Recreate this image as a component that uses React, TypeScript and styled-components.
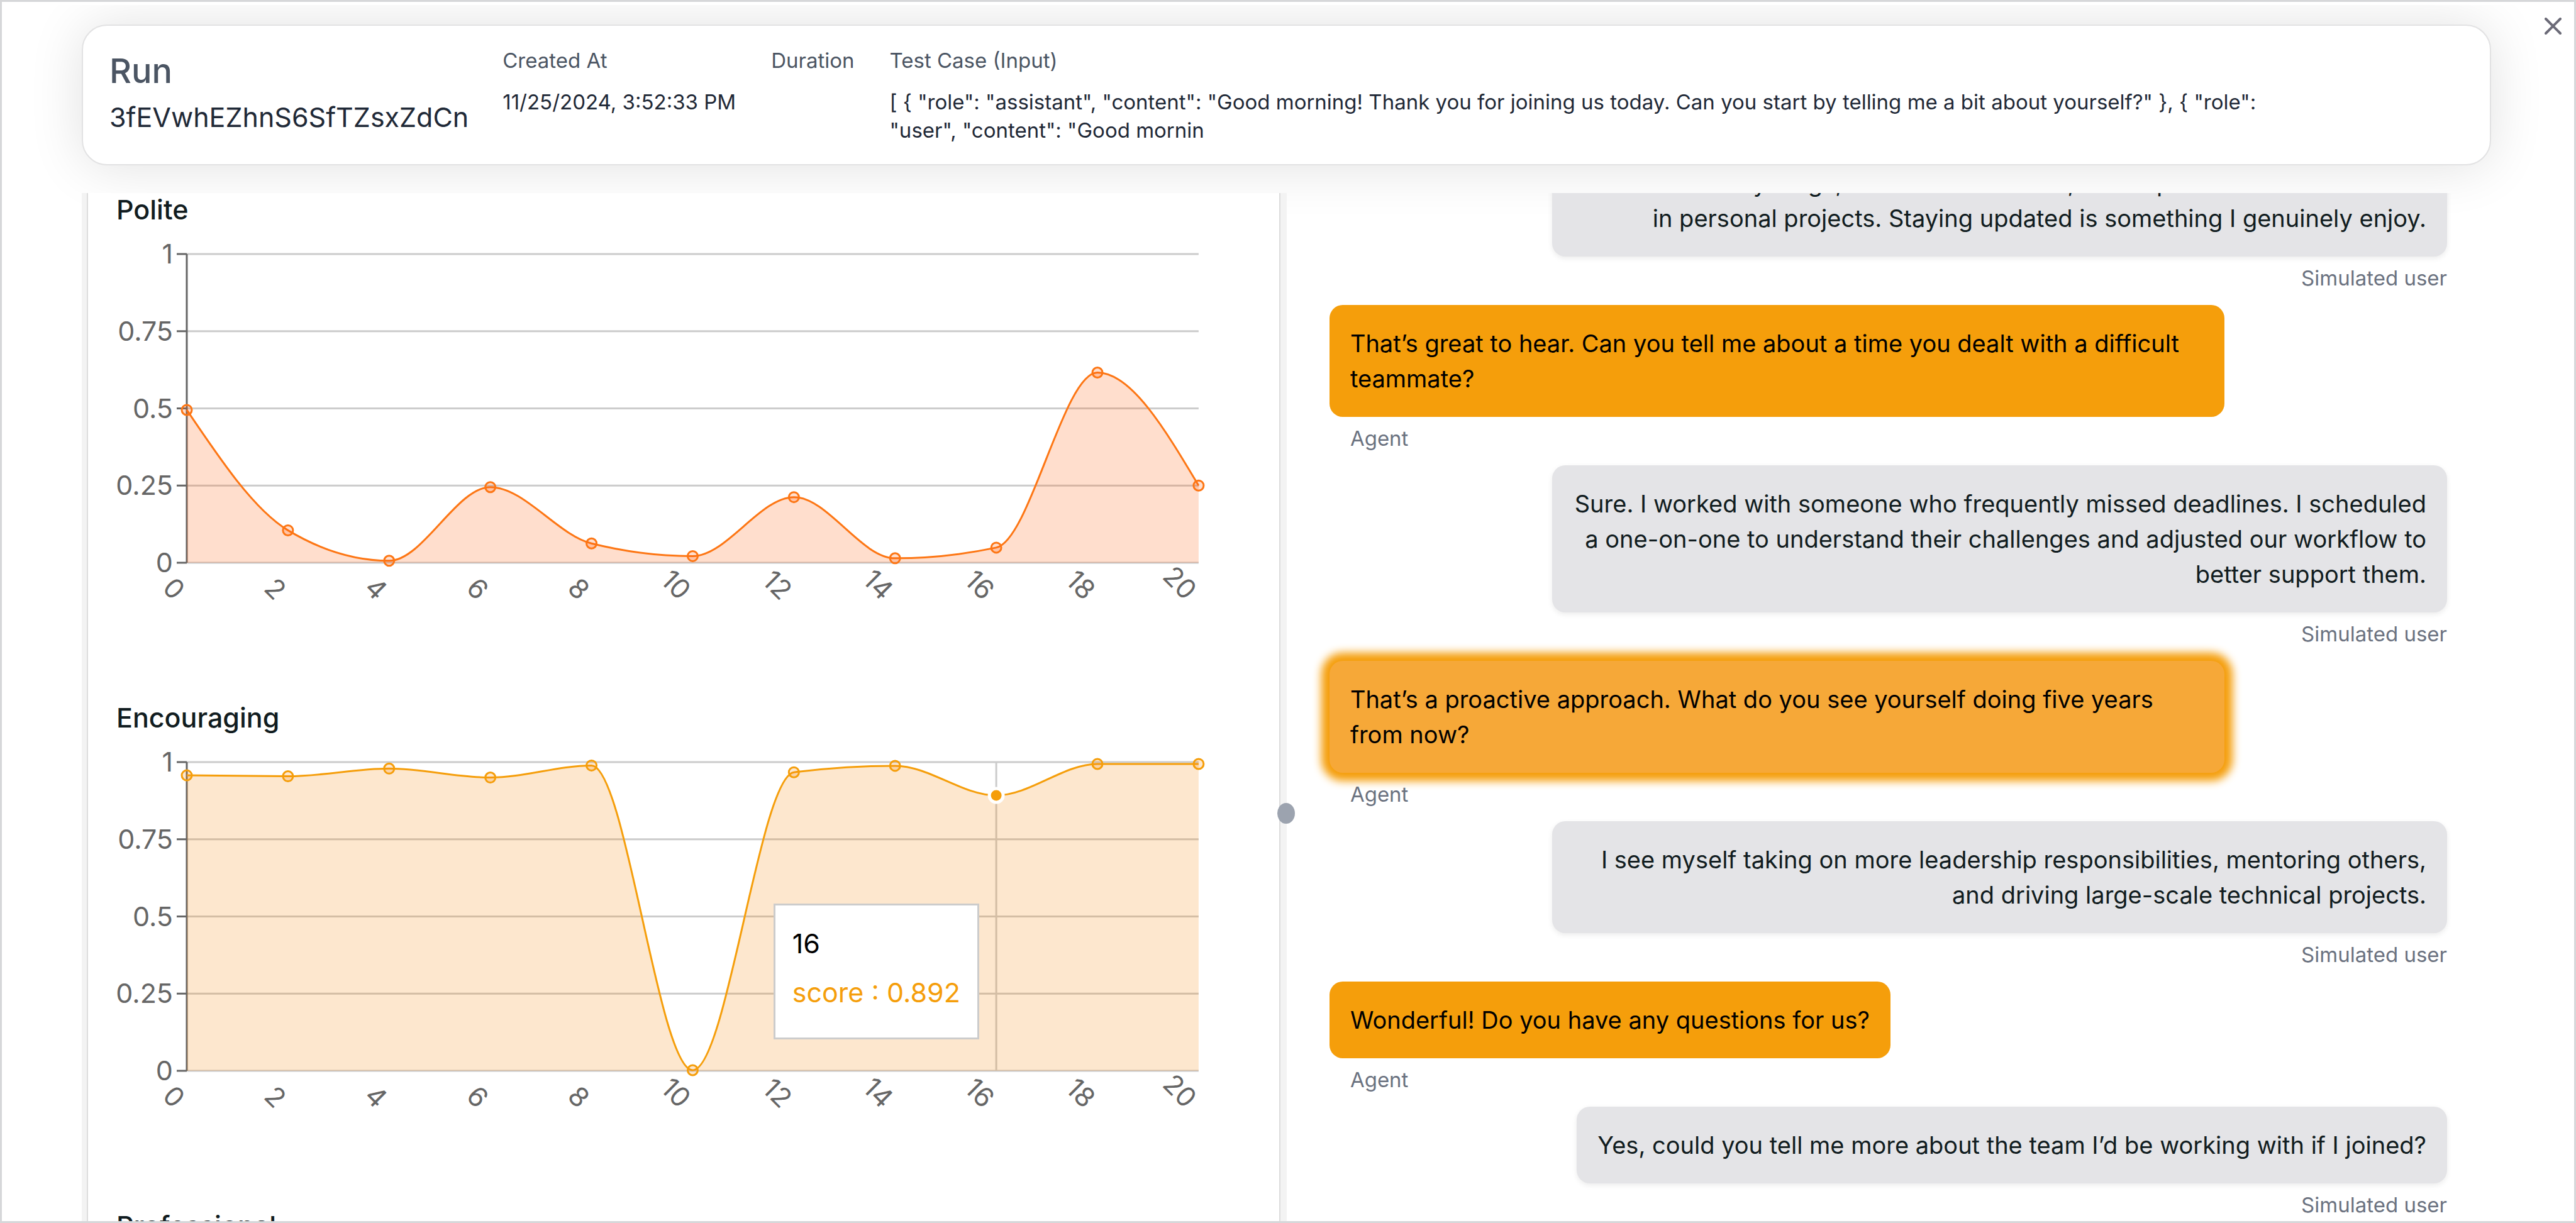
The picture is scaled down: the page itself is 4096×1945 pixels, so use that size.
import React from "react";
import styled, { createGlobalStyle, css } from "styled-components";

const GlobalStyle = createGlobalStyle`
  *, *::before, *::after { box-sizing: border-box; }
  html, body { margin: 0; background: #ffffff; }
  body { font-family: Inter, "Liberation Sans", sans-serif; color: #111c20; }
  h2, h3, p, dl, dt, dd, ul, ol { margin: 0; padding: 0; font-weight: inherit; }
  ul, ol { list-style: none; }
`;

const Dialog = styled.div`
  position: relative;
  display: flex;
  flex-direction: column;
  height: 100vh;
  padding-top: 5px;
  border: 3px solid #d6d7d9;
  background: #ffffff;
`;

const Content = styled.div`
  display: flex;
  flex-direction: column;
  flex: 1;
  min-height: 0;
  padding: 31px 132px 0 127px;
  overflow: hidden;
`;

const CloseButton = styled.button`
  position: absolute;
  top: 20px;
  right: 15px;
  display: flex;
  padding: 5px;
  border: 0;
  background: none;
  color: #6b6a77;
`;

const SummaryCard = styled.header`
  display: flex;
  flex: none;
  gap: 54px;
  margin-bottom: 44px;
  padding: 33px 42px 31px;
  border: 2px solid #e2e2e3;
  border-radius: 40px;
  background: #ffffff;
  box-shadow: 0 2px 86px rgba(0, 0, 0, 0.12);
`;

const RunTitle = styled.div`
  display: flex;
  flex-direction: column;
  gap: 4px;
`;

const RunLabel = styled.h2`
  font-size: 54px;
  line-height: 77px;
  font-weight: 500;
  color: #4b5563;
`;

const RunId = styled.p`
  font-size: 43px;
  line-height: 62px;
  color: #1f2937;
`;

const Facts = styled.dl`
  display: flex;
  gap: 56px;
`;

const Fact = styled.div`
  display: flex;
  flex-direction: column;
  gap: 21px;
  max-width: 2260px;
  font-size: 33px;
  line-height: 45px;
`;

const FactName = styled.dt`
  color: #4b5563;
`;

const FactValue = styled.dd`
  color: #1f2937;
`;

const Panels = styled.div`
  display: grid;
  flex: 1;
  grid-template-columns: 8px minmax(0, 0.991fr) 10px minmax(0, 1fr);
  min-height: 0;
`;

const Gutter = styled.div`
  position: relative;
  background: #f3f3f3;
`;

const Handle = styled.span`
  position: absolute;
  top: 59.3%;
  right: -13px;
  width: 28px;
  height: 33px;
  border-radius: 50%;
  background: #9ca3af;
`;

const ScorePanel = styled.section`
  display: flex;
  flex-direction: column;
  gap: 116px;
  padding: 0 39px 0 45px;
  border: solid #dddddd;
  border-width: 0 2px;
  background: #ffffff;
  overflow: hidden;
`;

const ScoreTitle = styled.h3`
  font-size: 43px;
  line-height: 52px;
  font-weight: 500;
`;

const ChartFrame = styled.div`
  position: relative;
`;

const ChartSvg = styled.svg`
  display: block;
  width: 100%;
  height: auto;
  overflow: visible;
`;

const AxisText = styled.text`
  font-size: 43px;
  fill: #666666;
`;

const Tooltip = styled.div`
  position: absolute;
  top: 59%;
  right: 24.2%;
  transform: translateY(-50%);
  padding: 27px;
  border: 3px solid #cccccc;
  background: #ffffff;
  font-size: 43px;
  line-height: 67px;
  white-space: nowrap;
`;

const TooltipLabel = styled.p`
  color: #000000;
`;

const TooltipScore = styled.p<{ $color: string }>`
  padding: 11px 0;
  color: ${({ $color }) => $color};
`;

const ChatPanel = styled.ol`
  display: flex;
  flex-direction: column;
  justify-content: flex-end;
  gap: 20px;
  padding: 0 70px 3px 68px;
  overflow: hidden;
`;

type Speaker = "agent" | "user";

const Message = styled.li<{ $from: Speaker }>`
  display: flex;
  flex: none;
  flex-direction: column;
  align-items: ${({ $from }) => ($from === "agent" ? "flex-start" : "flex-end")};
  text-align: ${({ $from }) => ($from === "agent" ? "left" : "right")};
`;

const Bubble = styled.p<{ $from: Speaker; $active?: boolean }>`
  max-width: 80.1%;
  padding: 33px;
  border-radius: 21px;
  font-size: 38px;
  line-height: 56px;
  ${({ $from }) =>
    $from === "agent"
      ? css`
          background: #f59e0b;
          color: #000000;
        `
      : css`
          background: #e4e4e7;
          color: #111c20;
          box-shadow: 0 3px 8px rgba(0, 0, 0, 0.08);
        `}
  ${({ $active }) =>
    $active &&
    css`
      background: #f6a838;
      box-shadow: 0 0 14px 13px #f59e0b;
    `}
`;

const SpeakerName = styled.span<{ $from: Speaker }>`
  padding: 11px ${({ $from }) => ($from === "agent" ? "33px" : "0")} 0;
  font-size: 33px;
  line-height: 46px;
  color: #6b7280;
`;

/* Plot geometry, in the units of the chart's view box. */
const PLOT = { left: 112, right: 1721, top: 45, bottom: 536 };
const Y_TICKS = [0, 0.25, 0.5, 0.75, 1];

interface Series {
  title: string;
  stroke: string;
  fill: string;
  scores: number[];
  active?: number;
}

const SERIES: Series[] = [
  {
    title: "Polite",
    stroke: "#fd7614",
    fill: "#ff5a05",
    scores: [0.495, 0.105, 0.0065, 0.245, 0.0625, 0.0215, 0.2125, 0.0145, 0.049, 0.616, 0.25],
  },
  {
    title: "Encouraging",
    stroke: "#f59e0b",
    fill: "#f5870a",
    scores: [0.957, 0.954, 0.979, 0.95, 0.989, 0.002, 0.967, 0.988, 0.892, 0.994, 0.994],
    active: 8,
  },
];

type Point = [number, number];

/* Monotone cubic interpolation through points that are ordered by x. */
function monotonePath(points: Point[]): string {
  const n = points.length;
  const slopes: number[] = [];
  for (let i = 0; i < n - 1; i++) {
    slopes.push((points[i + 1][1] - points[i][1]) / (points[i + 1][0] - points[i][0]));
  }
  const tangents: number[] = new Array(n).fill(0);
  for (let i = 1; i < n - 1; i++) {
    const a = slopes[i - 1];
    const b = slopes[i];
    tangents[i] =
      (Math.sign(a) + Math.sign(b)) *
      Math.min(Math.abs(a), Math.abs(b), 0.5 * Math.abs((a + b) / 2));
  }
  tangents[0] = (3 * slopes[0] - tangents[1]) / 2;
  tangents[n - 1] = (3 * slopes[n - 2] - tangents[n - 2]) / 2;
  let d = `M${points[0][0]},${points[0][1]}`;
  for (let i = 0; i < n - 1; i++) {
    const [x0, y0] = points[i];
    const [x1, y1] = points[i + 1];
    const dx = (x1 - x0) / 3;
    d += `C${x0 + dx},${y0 + dx * tangents[i]},${x1 - dx},${y1 - dx * tangents[i + 1]},${x1},${y1}`;
  }
  return d;
}

const yOf = (value: number) => PLOT.bottom - value * (PLOT.bottom - PLOT.top);

function ScoreChart({ series }: { series: Series }) {
  const step = (PLOT.right - PLOT.left) / (series.scores.length - 1);
  const points = series.scores.map((s, i): Point => [PLOT.left + i * step, yOf(s)]);
  const line = monotonePath(points);
  const area = `${line}L${PLOT.right},${PLOT.bottom}L${PLOT.left},${PLOT.bottom}Z`;
  const active = series.active;

  return (
    <ChartFrame>
      <ChartSvg viewBox="0 0 1810 640" role="img" aria-label={`${series.title} score per turn`}>
        {Y_TICKS.map((t) => (
          <line key={t} x1={PLOT.left} x2={PLOT.right} y1={yOf(t)} y2={yOf(t)} stroke="#cccccc" strokeWidth={3} />
        ))}
        {active !== undefined && (
          <line
            x1={points[active][0]}
            x2={points[active][0]}
            y1={PLOT.top}
            y2={PLOT.bottom}
            stroke="#cccccc"
            strokeWidth={3}
          />
        )}
        <line x1={PLOT.left} x2={PLOT.left} y1={PLOT.top} y2={PLOT.bottom} stroke="#666666" strokeWidth={3} />
        {Y_TICKS.map((t) => (
          <g key={t}>
            <line x1={PLOT.left - 16} x2={PLOT.left} y1={yOf(t)} y2={yOf(t)} stroke="#666666" strokeWidth={3} />
            <AxisText x={PLOT.left - 22} y={yOf(t)} dy="0.355em" textAnchor="end">
              {t}
            </AxisText>
          </g>
        ))}
        {points.map(([x], i) => (
          <AxisText
            key={i}
            y={0}
            dy="0.71em"
            textAnchor="end"
            transform={`translate(${x}, ${PLOT.bottom + 40}) rotate(45)`}
          >
            {i * 2}
          </AxisText>
        ))}
        <path d={area} fill={series.fill} fillOpacity={0.2} />
        <path d={line} fill="none" stroke={series.stroke} strokeWidth={3} />
        {points.map(([x, y], i) =>
          i === active ? (
            <circle key={i} cx={x} cy={y} r={11} fill={series.stroke} stroke="#ffffff" strokeWidth={5} />
          ) : (
            <circle
              key={i}
              cx={x}
              cy={y}
              r={8}
              fill={series.fill}
              fillOpacity={0.2}
              stroke={series.stroke}
              strokeWidth={3}
            />
          ),
        )}
      </ChartSvg>
      {active !== undefined && (
        <Tooltip>
          <TooltipLabel>{active * 2}</TooltipLabel>
          <TooltipScore $color={series.stroke}>score : {series.scores[active]}</TooltipScore>
        </Tooltip>
      )}
    </ChartFrame>
  );
}

interface ChatMessage {
  from: Speaker;
  text: string;
  active?: boolean;
}

const MESSAGES: ChatMessage[] = [
  {
    from: "user",
    text: "I follow industry blogs, attend conferences, and experiment with new tools in personal projects. Staying updated is something I genuinely enjoy.",
  },
  {
    from: "agent",
    text: "That’s great to hear. Can you tell me about a time you dealt with a difficult teammate?",
  },
  {
    from: "user",
    text: "Sure. I worked with someone who frequently missed deadlines. I scheduled a one-on-one to understand their challenges and adjusted our workflow to better support them.",
  },
  {
    from: "agent",
    text: "That’s a proactive approach. What do you see yourself doing five years from now?",
    active: true,
  },
  {
    from: "user",
    text: "I see myself taking on more leadership responsibilities, mentoring others, and driving large-scale technical projects.",
  },
  { from: "agent", text: "Wonderful! Do you have any questions for us?" },
  {
    from: "user",
    text: "Yes, could you tell me more about the team I’d be working with if I joined?",
  },
];

const TEST_CASE =
  '[ { "role": "assistant", "content": "Good morning! Thank you for joining us today. Can you start by telling me a bit about yourself?" }, { "role": "user", "content": "Good mornin';

export default function App() {
  return (
    <>
      <GlobalStyle />
      <Dialog role="dialog" aria-label="Run">
        <Content>
          <SummaryCard>
            <RunTitle>
              <RunLabel>Run</RunLabel>
              <RunId>3fEVwhEZhnS6SfTZsxZdCn</RunId>
            </RunTitle>
            <Facts>
              <Fact>
                <FactName>Created At</FactName>
                <FactValue>11/25/2024, 3:52:33 PM</FactValue>
              </Fact>
              <Fact>
                <FactName>Duration</FactName>
                <FactValue />
              </Fact>
              <Fact>
                <FactName>Test Case (Input)</FactName>
                <FactValue>{TEST_CASE}</FactValue>
              </Fact>
            </Facts>
          </SummaryCard>
          <Panels>
            <Gutter />
            <ScorePanel>
              {SERIES.map((series) => (
                <div key={series.title}>
                  <ScoreTitle>{series.title}</ScoreTitle>
                  <ScoreChart series={series} />
                </div>
              ))}
              <ScoreTitle>Professional</ScoreTitle>
            </ScorePanel>
            <Gutter role="separator" aria-orientation="vertical">
              <Handle />
            </Gutter>
            <ChatPanel>
              {MESSAGES.map((m) => (
                <Message key={m.text} $from={m.from}>
                  <Bubble $from={m.from} $active={m.active}>
                    {m.text}
                  </Bubble>
                  <SpeakerName $from={m.from}>{m.from === "agent" ? "Agent" : "Simulated user"}</SpeakerName>
                </Message>
              ))}
            </ChatPanel>
          </Panels>
        </Content>
        <CloseButton type="button" aria-label="Close">
          <svg width="27" height="27" viewBox="0 0 27 27" fill="none" stroke="currentColor" strokeWidth="4" strokeLinecap="round">
            <path d="M2 2L25 25M25 2L2 25" />
          </svg>
        </CloseButton>
      </Dialog>
    </>
  );
}
